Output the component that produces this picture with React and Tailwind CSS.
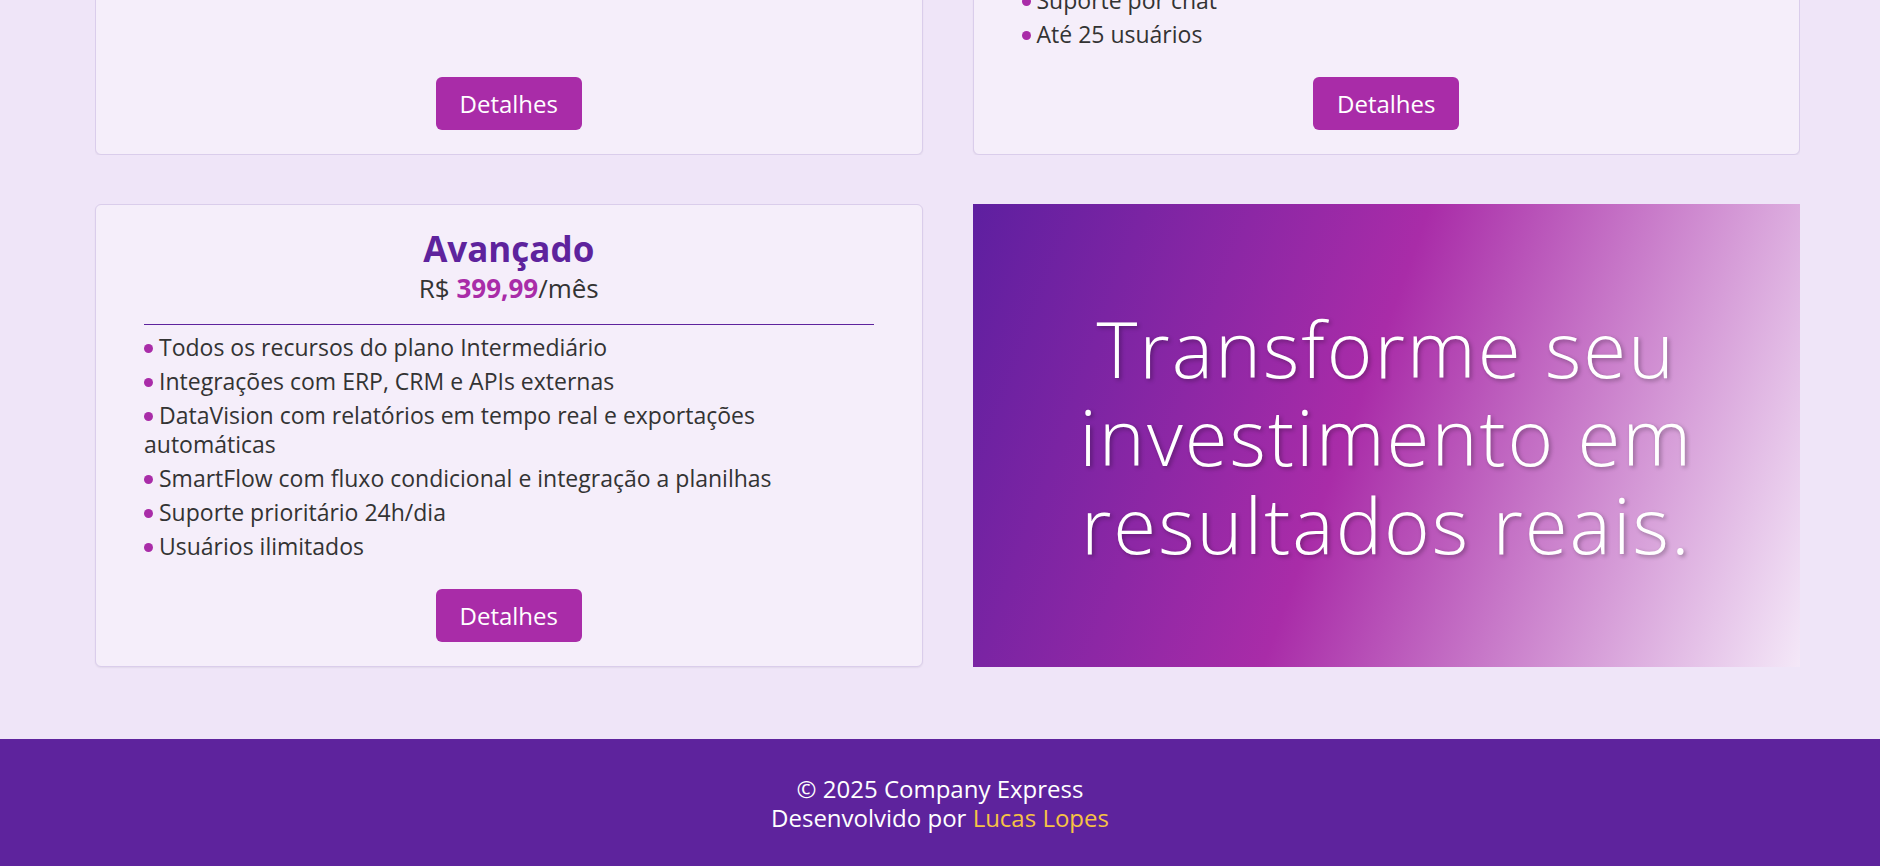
import React from "react";

const plans = [
  {
    name: "Básico",
    price: "149,99",
    items: [
      "Painel de gestão e cadastro de clientes",
      "Relatórios mensais simples",
      "Até 5 usuários",
    ],
  },
  {
    name: "Intermediário",
    price: "249,99",
    items: [
      "Todos os recursos do plano Básico",
      "DataVision com relatórios semanais",
      "SmartFlow com automações básicas",
      "Integração com e-mail e agenda",
      "Suporte por chat",
      "Até 25 usuários",
    ],
  },
];

const advanced = {
  name: "Avançado",
  price: "399,99",
  items: [
    "Todos os recursos do plano Intermediário",
    "Integrações com ERP, CRM e APIs externas",
    "DataVision com relatórios em tempo real e exportações automáticas",
    "SmartFlow com fluxo condicional e integração a planilhas",
    "Suporte prioritário 24h/dia",
    "Usuários ilimitados",
  ],
};

function PlanCard({ plan }) {
  return (
    <div className="flex flex-col rounded-md border border-[#dacdeb] bg-[#f5eefa] px-12 pt-[24px] pb-6 shadow-[0_1px_2px_rgba(0,0,0,0.06)]">
      <h3 className="text-center font-['Open_Sans',sans-serif] text-[35px] font-bold leading-[40px] text-[#5e239d]">
        {plan.name}
      </h3>
      <p className="mt-[4px] text-center text-[26px] leading-[30px]">
        R$ <strong className="font-bold text-[#a92ca8]">{plan.price}</strong>/mês
      </p>
      <hr className="mt-[21px] border-0 border-t border-[#5e239d]" />

      {/* features */}
      <ul className="mt-[8px] mb-[28px] flex flex-col gap-[5px]">
        {plan.items.map((item) => (
          <li key={item} className="text-[23px] leading-[29px] text-[#333]">
            <span className="mr-[6px] inline-block h-[9px] w-[9px] rounded-full bg-[#a92ca8] align-[3px]"></span>
            {item}
          </li>
        ))}
      </ul>

      <button className="mt-auto flex h-[53px] items-center self-center rounded-md bg-[#a92ca8] px-6 text-[24px] text-white">
        Detalhes
      </button>
    </div>
  );
}

export default function App() {
  return (
    <div className="min-h-screen bg-[#efe5f8] font-['Open_Sans',sans-serif] text-[#333]">
      <section className="pl-[95px] pr-[80px] pb-[72px]">
        {/* first row, scrolled past */}
        <div className="flex h-[155px] flex-col justify-end overflow-hidden">
          <div className="grid shrink-0 grid-cols-2 gap-[50px]">
            {plans.map((p) => (
              <PlanCard key={p.name} plan={p} />
            ))}
          </div>
        </div>

        <div className="mt-[49px] grid grid-cols-2 gap-[50px]">
          <PlanCard plan={advanced} />
          <div className="flex items-center justify-center bg-[linear-gradient(110deg,#5e1fa0_0%,#a92ca8_46%,#f4e8f8_100%)] text-center">
            <h2 className="font-['Open_Sans',sans-serif] text-[78px] font-light leading-[88px] tracking-[2px] text-white [text-shadow:2px_2px_4px_rgba(0,0,0,0.3)]">
              Transforme seu
              <br />
              investimento em
              <br />
              resultados reais.
            </h2>
          </div>
        </div>
      </section>

      <footer className="bg-[#5e239d] pt-[35px] pb-[34px] text-center text-[24px] leading-[29px] text-white">
        <p>© 2025 Company Express</p>
        <p>
          Desenvolvido por <span className="text-[#f6c244]">Lucas Lopes</span>
        </p>
      </footer>
    </div>
  );
}
